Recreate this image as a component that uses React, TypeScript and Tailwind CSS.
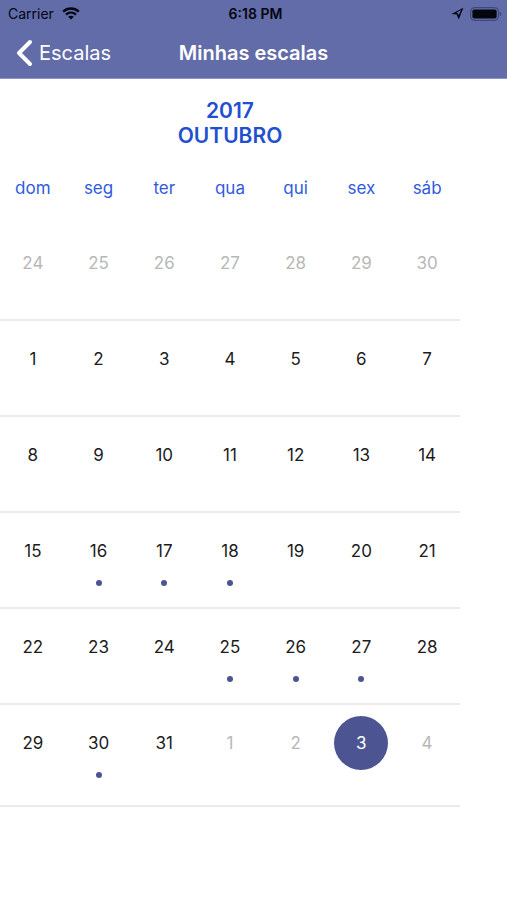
import {useState} from "react";
import clsx from "clsx";

type Day = {
  id: string;
  label: number;
  outside: boolean;
  marked: boolean;
};

const WEEKDAYS = ["dom", "seg", "ter", "qua", "qui", "sex", "sáb"];
const MARKED_DAYS = [16, 17, 18, 25, 26, 27, 30];

// October 2017 starts on a Sunday, so the whole last week of September leads it
function buildWeeks(): Day[][] {
  const days: Day[] = [];
  for (let d = 24; d <= 30; d++) {
    days.push({id: `09-${d}`, label: d, outside: true, marked: false});
  }
  for (let d = 1; d <= 31; d++) {
    days.push({id: `10-${d}`, label: d, outside: false, marked: MARKED_DAYS.includes(d)});
  }
  for (let d = 1; d <= 4; d++) {
    days.push({id: `11-${d}`, label: d, outside: true, marked: false});
  }
  return Array.from({length: 6}, (_, i) => days.slice(i * 7, i * 7 + 7));
}

const WEEKS = buildWeeks();

function WifiIcon() {
  return (
    <svg width="18" height="13" viewBox="0 0 18 13" fill="none" aria-hidden="true">
      <path d="M1.2 4.6C5.6 .5 12.4 .5 16.8 4.6" stroke="currentColor" strokeWidth="2.4"/>
      <path d="M4 7.6C6.9 5 11.1 5 14 7.6" stroke="currentColor" strokeWidth="2.2"/>
      <path d="M9 12.6 6.2 9.8C7.8 8.4 10.2 8.4 11.8 9.8Z" fill="currentColor"/>
    </svg>
  );
}

function LocationIcon() {
  return (
    <svg width="13" height="13" viewBox="0 0 13 13" fill="none" aria-hidden="true">
      <path d="M12.4 .8 .4 7 5.6 7.6 7.8 12.6Z" fill="currentColor"/>
      <path d="M10 3 5.4 5.8 7 6.4 7.8 8.2Z" fill="#626ca8"/>
    </svg>
  );
}

function BatteryIcon() {
  return (
    <svg width="33" height="14" viewBox="0 0 33 14" fill="none" aria-hidden="true">
      <rect x=".7" y=".7" width="27.6" height="12.6" rx="3.4" stroke="#39406f" strokeWidth="1"/>
      <rect x="2.4" y="2.4" width="24.2" height="9.2" rx="1.8" fill="currentColor"/>
      <path d="M29.8 4.8C31.6 5.4 31.6 8.6 29.8 9.2Z" fill="#39406f"/>
    </svg>
  );
}

function StatusBar() {
  return (
    <div className="grid h-[27px] grid-cols-[1fr_auto_1fr] items-center pr-1 pl-2 text-sm text-[#04060f]">
      <div className="flex items-center gap-2">
        <span>Carrier</span>
        <WifiIcon/>
      </div>
      <span className="font-semibold">6:18 PM</span>
      <div className="flex items-center justify-end gap-1.5">
        <LocationIcon/>
        <BatteryIcon/>
      </div>
    </div>
  );
}

function NavBar() {
  return (
    <div className="grid h-[51px] grid-cols-[1fr_auto_1fr] items-center px-4 text-white">
      <button type="button" className="flex items-center gap-1.5 justify-self-start text-xl">
        <svg width="17" height="28" viewBox="0 0 17 28" fill="none" aria-hidden="true">
          <path
            d="M14 3 3 14 14 25"
            stroke="currentColor"
            strokeWidth="4"
            strokeLinecap="round"
            strokeLinejoin="round"
          />
        </svg>
        <span>Escalas</span>
      </button>
      <h1 className="text-xl font-semibold">Minhas escalas</h1>
    </div>
  );
}

export default function App() {
  const [selected, setSelected] = useState("11-3");

  return (
    <div className="min-h-screen bg-white font-['Inter',sans-serif]">
      <header className="border-b border-[#8c96c4] bg-[#626ca8]">
        <StatusBar/>
        <NavBar/>
      </header>

      <main className="pr-[47px]">
        <h2 className="pt-[19px] text-center text-[21px] leading-[25px] font-semibold text-[#1f50d0]">
          2017
          <br/>
          OUTUBRO
        </h2>

        <table className="mt-[26px] w-full table-fixed border-separate border-spacing-0 text-center">
          <thead>
            <tr>
              {WEEKDAYS.map((name) => (
                <th key={name} scope="col" className="h-[51px] p-0 pt-0.5 align-top text-[17px] leading-6 font-normal text-[#2f5bdc]">
                  {name}
                </th>
              ))}
            </tr>
          </thead>
          <tbody>
            {WEEKS.map((week, row) => (
              <tr key={week[0].id}>
                {week.map((day) => {
                  const isSelected = day.id === selected;
                  return (
                    <td
                      key={day.id}
                      className={clsx(
                        "border-b-2 border-[#ebebed] p-0 pt-[11px] align-top",
                        row === WEEKS.length - 1 ? "h-[102px]" : "h-24"
                      )}
                    >
                      <button
                        type="button"
                        aria-pressed={isSelected}
                        onClick={() => setSelected(day.id)}
                        className={clsx(
                          "mx-auto flex size-[54px] items-center justify-center rounded-full pt-0.5 text-[17px]",
                          isSelected && "bg-[#4c5592] text-white",
                          !isSelected && (day.outside ? "text-[#b8b8b8]" : "text-[#1c1c1c]")
                        )}
                      >
                        {day.label}
                      </button>
                      {day.marked && <div className="mx-auto mt-0.5 size-1.5 rounded-full bg-[#4c5592]"/>}
                    </td>
                  );
                })}
              </tr>
            ))}
          </tbody>
        </table>
      </main>
    </div>
  );
}
